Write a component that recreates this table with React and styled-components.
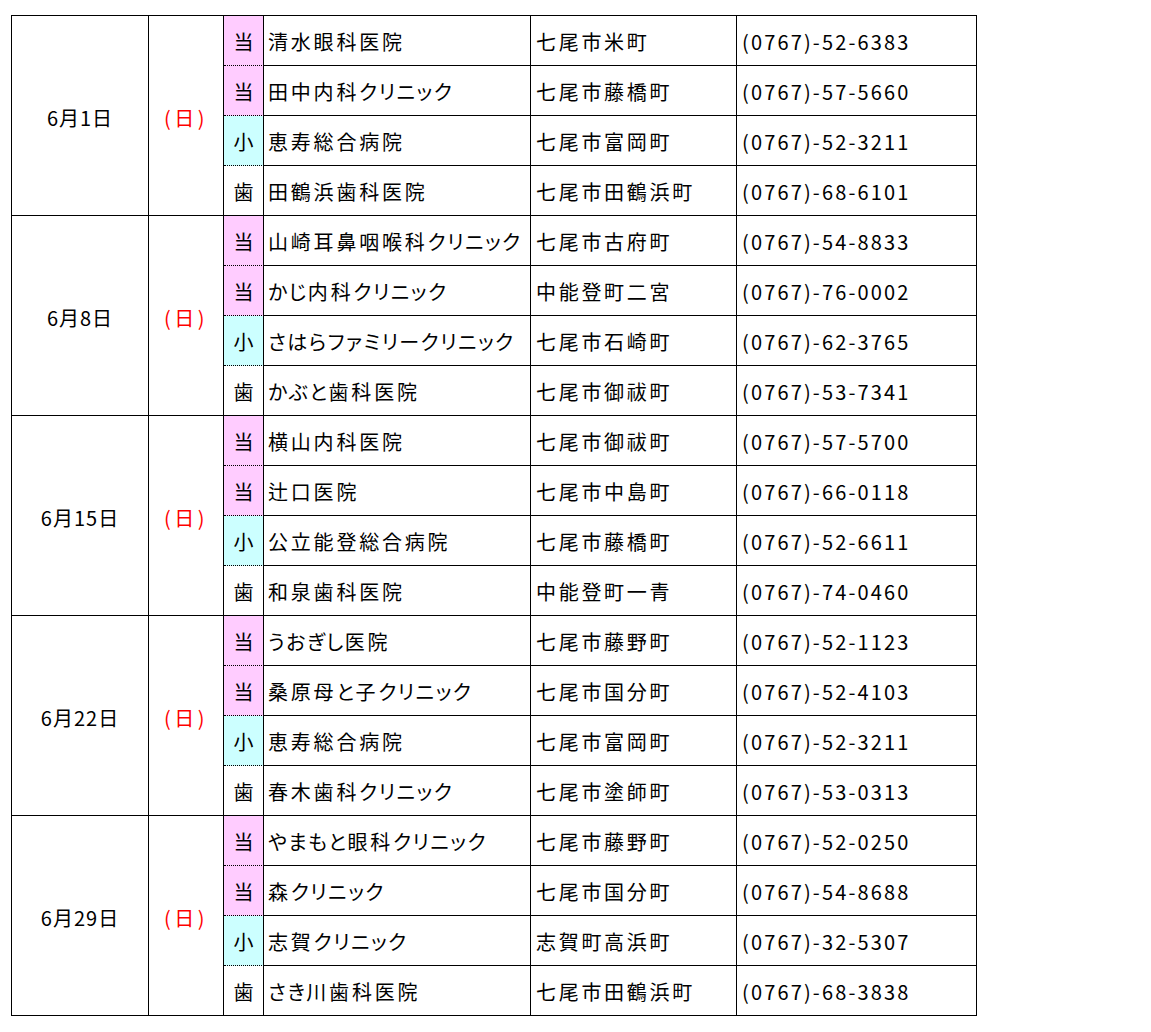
import React from "react";
import styled, { createGlobalStyle } from "styled-components";

const GlobalStyle = createGlobalStyle`
  body {
    margin: 0;
    background: #ffffff;
    font-family: "Noto Sans CJK JP", "Noto Sans", sans-serif;
    color: #000000;
  }
`;

const Page = styled.div`
  padding: 15px 0 0 11px;
`;

const Table = styled.table`
  border-collapse: separate;
  border-spacing: 0;
  table-layout: fixed;
  width: 966px;
  border-top: 1px solid #000;
  border-left: 1px solid #000;
  font-size: 20px;
  line-height: 1;

  td {
    border-right: 1px solid #000;
    border-bottom: 1px solid #000;
    padding: 0;
    white-space: nowrap;
    overflow: hidden;
  }
`;

const Col = styled.col`
  width: ${(p) => p.$w}px;
`;

const Row = styled.tr`
  height: 50px;
`;

const DateCell = styled.td`
  text-align: center;
  letter-spacing: 1px;
  padding-top: 4px !important;
`;

const DayCell = styled.td`
  text-align: center;
  color: #ff0000;
  letter-spacing: 3.5px;
  padding-top: 4px !important;
`;

const TypeCell = styled.td`
  text-align: center;
  background: ${(p) => p.$bg};
  border-bottom-style: ${(p) => (p.$dotted ? "dotted" : "solid")} !important;
  padding-top: 3px !important;
`;

const NameCell = styled.td`
  padding: 3px 0 0 4px !important;
  letter-spacing: 2.8px;
  font-feature-settings: "palt";
`;

const Kana = styled.span`
  letter-spacing: 1.5px;
`;

const AddrCell = styled.td`
  padding: 3px 0 0 5px !important;
  letter-spacing: 2.7px;
`;

const PhoneCell = styled.td`
  padding: 3px 0 0 5px !important;
  letter-spacing: 2.15px;
`;

const typeColors = {
  当: "#ffccff",
  小: "#ccffff",
  歯: "#ffffff",
};

const columns = [137, 75, 40, 267, 206, 240];

const schedule = [
  {
    date: "6月1日",
    rows: [
      ["当", "清水眼科医院", "七尾市米町", "(0767)-52-6383"],
      ["当", "田中内科クリニック", "七尾市藤橋町", "(0767)-57-5660"],
      ["小", "恵寿総合病院", "七尾市富岡町", "(0767)-52-3211"],
      ["歯", "田鶴浜歯科医院", "七尾市田鶴浜町", "(0767)-68-6101"],
    ],
  },
  {
    date: "6月8日",
    rows: [
      ["当", "山崎耳鼻咽喉科クリニック", "七尾市古府町", "(0767)-54-8833"],
      ["当", "かじ内科クリニック", "中能登町二宮", "(0767)-76-0002"],
      ["小", "さはらファミリークリニック", "七尾市石崎町", "(0767)-62-3765"],
      ["歯", "かぶと歯科医院", "七尾市御祓町", "(0767)-53-7341"],
    ],
  },
  {
    date: "6月15日",
    rows: [
      ["当", "横山内科医院", "七尾市御祓町", "(0767)-57-5700"],
      ["当", "辻口医院", "七尾市中島町", "(0767)-66-0118"],
      ["小", "公立能登総合病院", "七尾市藤橋町", "(0767)-52-6611"],
      ["歯", "和泉歯科医院", "中能登町一青", "(0767)-74-0460"],
    ],
  },
  {
    date: "6月22日",
    rows: [
      ["当", "うおぎし医院", "七尾市藤野町", "(0767)-52-1123"],
      ["当", "桑原母と子クリニック", "七尾市国分町", "(0767)-52-4103"],
      ["小", "恵寿総合病院", "七尾市富岡町", "(0767)-52-3211"],
      ["歯", "春木歯科クリニック", "七尾市塗師町", "(0767)-53-0313"],
    ],
  },
  {
    date: "6月29日",
    rows: [
      ["当", "やまもと眼科クリニック", "七尾市藤野町", "(0767)-52-0250"],
      ["当", "森クリニック", "七尾市国分町", "(0767)-54-8688"],
      ["小", "志賀クリニック", "志賀町高浜町", "(0767)-32-5307"],
      ["歯", "さき川歯科医院", "七尾市田鶴浜町", "(0767)-68-3838"],
    ],
  },
];

// kana is narrower than kanji in the original sheet font
const renderName = (name) =>
  name
    .split(/([\u3040-\u30ff]+)/)
    .filter(Boolean)
    .map((part, i) =>
      /^[\u3040-\u30ff]+$/.test(part) ? <Kana key={i}>{part}</Kana> : part
    );

const App = () => {
  return (
    <Page>
      <GlobalStyle />
      <Table>
        <colgroup>
          {columns.map((w, i) => (
            <Col key={i} $w={w} />
          ))}
        </colgroup>
        <tbody>
          {schedule.map((day) =>
            day.rows.map((row, i) => (
              <Row key={day.date + i}>
                {i === 0 && (
                  <>
                    <DateCell rowSpan={day.rows.length}>{day.date}</DateCell>
                    <DayCell rowSpan={day.rows.length}>(日)</DayCell>
                  </>
                )}
                <TypeCell
                  $bg={typeColors[row[0]]}
                  $dotted={i < day.rows.length - 1}
                >
                  {row[0]}
                </TypeCell>
                <NameCell>{renderName(row[1])}</NameCell>
                <AddrCell>{row[2]}</AddrCell>
                <PhoneCell>{row[3]}</PhoneCell>
              </Row>
            ))
          )}
        </tbody>
      </Table>
    </Page>
  );
};

export default App;
